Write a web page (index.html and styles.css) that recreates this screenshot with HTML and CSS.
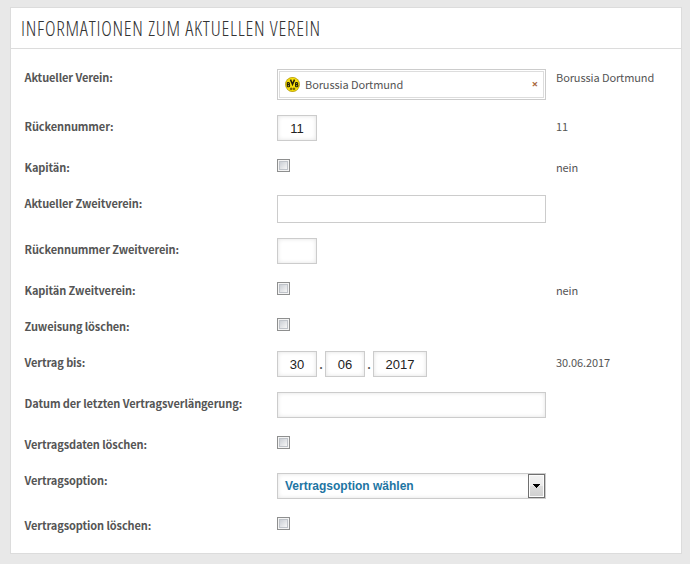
FILE: index.html
```html
<!DOCTYPE html>
<html lang="de">
<head>
<meta charset="utf-8">
<title>Informationen zum aktuellen Verein</title>
<link rel="stylesheet" href="styles.css">
</head>
<body>
<form class="panel">
  <h2 class="panel-title"><span>Informationen zum aktuellen Verein</span></h2>
  <div class="rows">
    <div class="row row-club">
      <label class="label">Aktueller Verein:</label>
      <div class="field">
        <div class="picker"><div class="picker-item">
          <svg class="crest" viewBox="0 0 15 15" width="15" height="15">
            <circle cx="7.5" cy="7.5" r="7.4" fill="#b99f08"/>
            <circle cx="7.5" cy="7.5" r="6.7" fill="#f7df0b"/>
            <path d="M2.3 5.5v4.3M2.3 5.6h1.2q1 0 1 1t-1 1H2.3h1.3q1.1 0 1.1 1.1T3.6 9.8H2.3M10.6 5.5v4.3M10.6 5.6h1.2q1 0 1 1t-1 1h-1.2h1.3q1.1 0 1.1 1.1t-1.1 1.1h-1.3" fill="none" stroke="#211d0b" stroke-width="1.1"/>
            <path d="M5.5 2.6L7.5 7.4L9.5 2.6" fill="none" stroke="#211d0b" stroke-width="1.5"/>
            <path d="M5.4 11h1.5v1.7H5.4zM8.2 11h1.5v1.7H8.2z" fill="#a38b09" stroke="#302a09" stroke-width=".5"/>
          </svg>
          <span class="picker-name">Borussia Dortmund</span>
          <span class="remove">×</span>
        </div></div>
      </div>
      <span class="current">Borussia Dortmund</span>
    </div>
    <div class="row row-input">
      <label class="label">Rückennummer:</label>
      <div class="field"><input class="text short" type="text" value="11"></div>
      <span class="current">11</span>
    </div>
    <div class="row row-check">
      <label class="label">Kapitän:</label>
      <div class="field"><input class="check" type="checkbox"></div>
      <span class="current">nein</span>
    </div>
    <div class="row row-search">
      <label class="label">Aktueller Zweitverein:</label>
      <div class="field"><input class="text search" type="text"></div>
    </div>
    <div class="row row-input">
      <label class="label">Rückennummer Zweitverein:</label>
      <div class="field"><input class="text short" type="text"></div>
    </div>
    <div class="row row-check">
      <label class="label">Kapitän Zweitverein:</label>
      <div class="field"><input class="check" type="checkbox"></div>
      <span class="current">nein</span>
    </div>
    <div class="row row-check">
      <label class="label">Zuweisung löschen:</label>
      <div class="field"><input class="check" type="checkbox"></div>
    </div>
    <div class="row row-input">
      <label class="label">Vertrag bis:</label>
      <div class="field date">
        <input class="text short" type="text" value="30"><span class="dot">.</span><input class="text short" type="text" value="06"><span class="dot">.</span><input class="text year" type="text" value="2017">
      </div>
      <span class="current">30.06.2017</span>
    </div>
    <div class="row row-input">
      <label class="label">Datum der letzten Vertragsverlängerung:</label>
      <div class="field"><input class="text" type="text"></div>
    </div>
    <div class="row row-check">
      <label class="label">Vertragsdaten löschen:</label>
      <div class="field"><input class="check" type="checkbox"></div>
    </div>
    <div class="row row-select">
      <label class="label">Vertragsoption:</label>
      <div class="field">
        <div class="select">
          <span class="select-value">Vertragsoption wählen</span>
          <span class="select-button"><svg width="7" height="4" viewBox="0 0 7 4" shape-rendering="crispEdges"><path d="M0 0h7v1H6v1H5v1H4v1H3V3H2V2H1V1H0z"/></svg></span>
        </div>
      </div>
    </div>
    <div class="row row-check row-last">
      <label class="label">Vertragsoption löschen:</label>
      <div class="field"><input class="check" type="checkbox"></div>
    </div>
  </div>
</form>
</body>
</html>
```
FILE: styles.css
```css
* { box-sizing: border-box; }
body {
  margin: 0;
  padding: 7px 8px 10px 10px;
  background: #e8e8e8;
  color: #555;
  font: 11px/18px "Noto Sans CJK SC", sans-serif;
  letter-spacing: -0.1px;
}
.panel {
  height: 547px;
  background: #fff;
  border: 1px solid #dcdcdc;
}
.panel-title {
  height: 41px;
  margin: 0;
  padding-left: 10px;
  border-bottom: 1px solid #dcdcdc;
  color: #333;
  font: 300 20px/42px "Open Sans", sans-serif;
  font-stretch: 75%;
  letter-spacing: 0.75px;
  text-transform: uppercase;
  white-space: nowrap;
}
.rows { padding: 16px 13px 0; }
.row {
  display: grid;
  grid-template-columns: 253px 269px 1fr;
  align-items: start;
}
.row-club { height: 50px; }
.row-input { height: 41px; }
.row-check { height: 36px; }
.row-search { height: 46px; }
.row-select { height: 44px; }
.label { margin-top: 2px; padding-left: 0.5px; font-weight: 700; white-space: nowrap; }
.current { margin: 2px 0 0 10px; white-space: nowrap; }
.row-club .label, .row-club .current, .row-last .label { margin-top: 3px; }
.field { display: flex; }
.row-club .field, .row-select .field { padding-top: 4px; }
.row-check .field, .row-search .field { padding-top: 3px; }
.row-last .field { padding-top: 4px; }
.text {
  width: 100%;
  height: 26px;
  margin: 0;
  padding: 0 7px;
  border: 1px solid #ccc;
  border-radius: 0;
  outline: 0;
  background: #fff;
  box-shadow: inset 0 0 4px rgba(0, 0, 0, .12);
  color: #222;
  font: 13px "Liberation Sans", sans-serif;
  text-align: center;
}
.short { width: 40px; }
.year { width: 54px; }
.search { height: 28px; box-shadow: none; }
.dot { width: 8px; text-align: center; line-height: 27px; font-weight: 700; }
.check {
  appearance: none;
  width: 13px;
  height: 13px;
  margin: 0;
  border: 1px solid #8e8f8f;
  background: linear-gradient(135deg, #cbcfd5, #f6f6f6) 2px 2px / 7px 7px no-repeat, #f4f4f4;
  box-shadow: inset 0 0 0 1px #f4f4f4, inset 0 0 0 2px #bfc3c9;
}
.picker { width: 100%; height: 31px; padding: 1px; border: 1px solid #ccc; }
.picker-item {
  display: flex;
  align-items: center;
  height: 27px;
  padding: 0 5px 1px 5px;
  border: 1px solid #ddd;
}
.crest { flex: none; }
.picker-name { margin: -1px 0 0 5px; }
.remove { margin-left: auto; color: #a8683c; font: 700 11px/18px "Open Sans", sans-serif; }
.select {
  display: flex;
  width: 100%;
  height: 26px;
  border: 1px solid #ccc;
  box-shadow: inset 0 0 4px rgba(0, 0, 0, .12);
}
.select-value {
  flex: 1;
  padding-left: 7px;
  color: #1d75a3;
  font: 700 12px/24px "Liberation Sans", sans-serif;
  letter-spacing: 0;
}
.select-button {
  display: flex;
  align-items: center;
  justify-content: center;
  width: 17px;
  height: 24px;
  border: 1px solid #707070;
  background: linear-gradient(#f2f2f2, #ebebeb 50%, #ddd 50%, #cfcfcf);
  box-shadow: inset 0 0 0 1px #fcfcfc;
}
```
